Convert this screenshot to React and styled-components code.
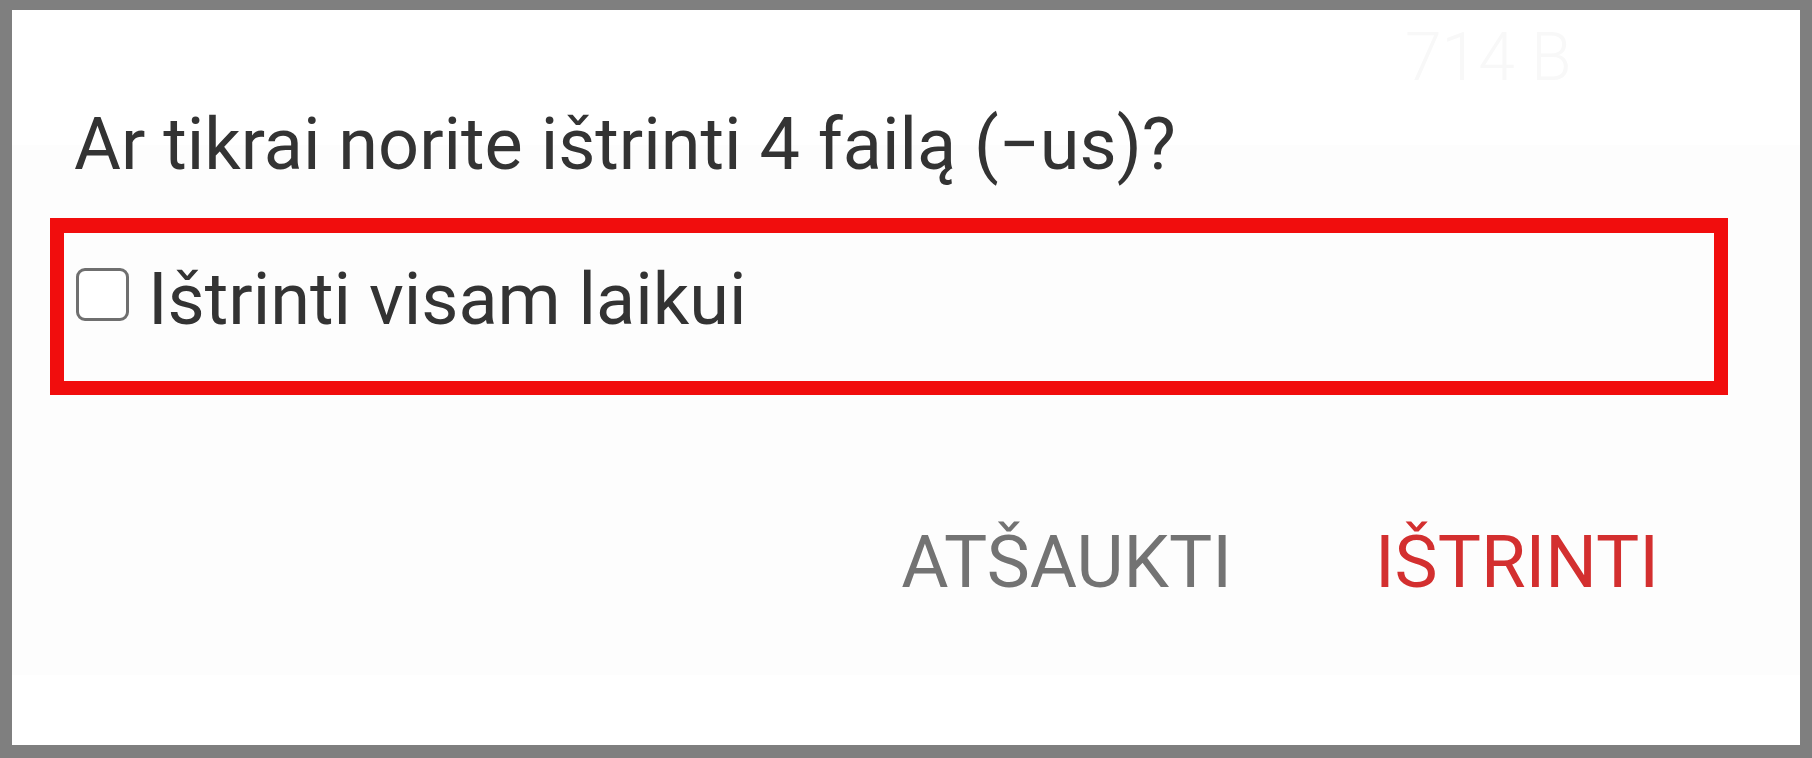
import React from 'react';
import styled, { createGlobalStyle } from 'styled-components';

const GlobalStyle = createGlobalStyle`
  html, body {
    margin: 0;
    padding: 0;
    background: #7f7f7f;
  }
  body {
    font-family: Roboto, "Noto Sans", "Liberation Sans", sans-serif;
  }
`;

const Frame = styled.div`
  width: 1812px;
  height: 758px;
  box-sizing: border-box;
  padding: 10px 12px 13px 12px;
  background: #7f7f7f;
`;

const Dialog = styled.div`
  position: relative;
  height: 100%;
  box-sizing: border-box;
  padding: 93px 0 0 62px;
  background: linear-gradient(
    to bottom,
    #ffffff 0,
    #ffffff 135px,
    #fdfdfd 135px,
    #fdfdfd 665px,
    #ffffff 665px
  );
  display: flex;
  flex-direction: column;
`;

// faint leftover of the list behind the dialog
const GhostText = styled.span`
  position: absolute;
  top: 6px;
  left: 1393px;
  font-size: 66px;
  font-weight: 300;
  color: #f8f8f8;
  line-height: 84px;
`;

const Message = styled.p`
  margin: 0;
  font-size: 72px;
  line-height: 84px;
  color: #333333;
  white-space: nowrap;
`;

const Highlight = styled.div`
  margin: 31px 0 0 -24px;
  width: 1678px;
  box-sizing: border-box;
  border: 14px solid #f10d0d;
  border-top-width: 15px;
  padding: 25px 0 39px 12px;
  display: flex;
  align-items: flex-start;
`;

const CheckRow = styled.label`
  display: flex;
  align-items: flex-start;
  gap: 19px;
  cursor: pointer;
`;

const Box = styled.span`
  width: 53px;
  height: 53px;
  margin-top: 10px;
  box-sizing: border-box;
  border: 3px solid #6f6f6f;
  border-radius: 9px;
  background: #ffffff;
  flex-shrink: 0;
`;

const CheckLabel = styled.span`
  font-size: 72px;
  line-height: 84px;
  color: #333333;
  white-space: nowrap;
`;

const Actions = styled.div`
  margin-top: 126px;
  display: flex;
  justify-content: flex-end;
  gap: 143px;
  padding-right: 141px;
`;

const ActionButton = styled.button`
  border: none;
  background: none;
  padding: 0;
  font-family: inherit;
  font-size: 72.5px;
  line-height: 84px;
  font-weight: 400;
  text-transform: uppercase;
  color: ${(p) => (p.$danger ? '#d32f2f' : '#737373')};
  white-space: nowrap;
  cursor: pointer;
`;

export default function App() {
  return (
    <>
      <GlobalStyle />
      <Frame>
        <Dialog>
          <GhostText>714 B</GhostText>
          <Message>Ar tikrai norite ištrinti 4 failą (−us)?</Message>
          <Highlight>
            <CheckRow>
              <Box />
              <CheckLabel>Ištrinti visam laikui</CheckLabel>
            </CheckRow>
          </Highlight>
          <Actions>
            <ActionButton>Atšaukti</ActionButton>
            <ActionButton $danger>Ištrinti</ActionButton>
          </Actions>
        </Dialog>
      </Frame>
    </>
  );
}
